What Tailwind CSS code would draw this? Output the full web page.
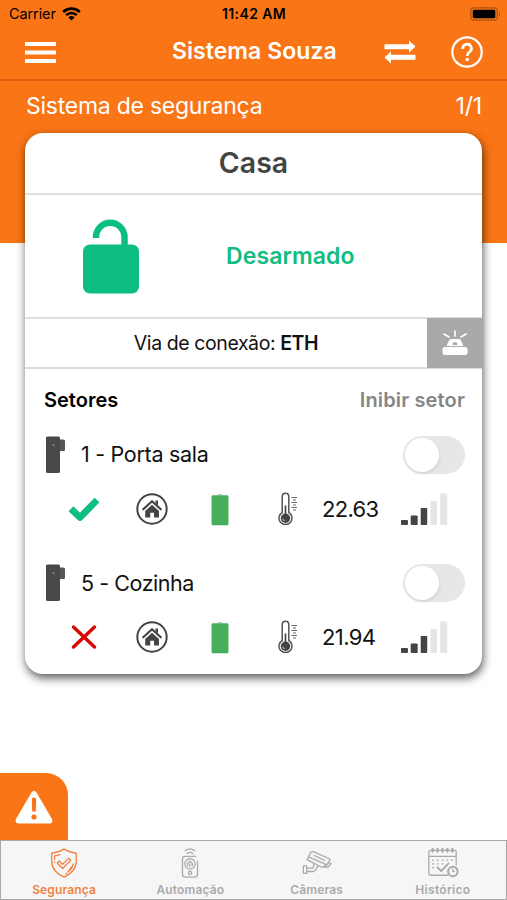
<!DOCTYPE html>
<html lang="pt-BR">
<head>
<meta charset="utf-8">
<meta name="viewport" content="width=device-width, initial-scale=1">
<title>Sistema Souza</title>
<script src="https://cdn.jsdelivr.net/npm/@tailwindcss/browser@4"></script>
</head>
<body class="bg-white">
<svg class="hidden">
  <defs>
    <symbol id="sensor" viewBox="0 0 20 38">
      <path d="M13 3.500H17.500Q19 3.500 19 5V13.500Q19 15 17.500 15H13Z" fill="#555"/>
      <rect x="0" y="0.500" width="14" height="36.500" rx="1.500" fill="#494949"/>
      <circle cx="7.500" cy="9" r="1" fill="#8a8a8a"/>
    </symbol>
    <symbol id="home" viewBox="0 0 32 32">
      <circle cx="16" cy="16" r="14.700" fill="none" stroke="#444" stroke-width="2"/>
      <path d="M7.200 16.300L16 8.200L24.800 16.300" fill="none" stroke="#444" stroke-width="2.200" stroke-linecap="round" stroke-linejoin="round"/>
      <path d="M19.500 7.500H22V12.500L19.500 10Z" fill="#444"/>
      <path d="M16 11.800L23 18V24.500H18V19.800H14.200V24.500H9.200V18Z" fill="#444"/>
    </symbol>
    <symbol id="battery" viewBox="0 0 18 33">
      <path d="M6.500 2Q6.500 1 7.500 1H10.500Q11.500 1 11.500 2Z" fill="#c3c9bd"/>
      <rect x="0.500" y="2.300" width="17" height="30" rx="1.500" fill="#45af59"/>
    </symbol>
    <symbol id="thermo" viewBox="0 0 20 34">
      <path d="M4.200 20.500V4.500A3.300 3.300 0 0 1 10.800 4.500V20.500A6.500 6.500 0 1 1 4.200 20.500Z" fill="#fff" stroke="#555" stroke-width="1.500"/>
      <circle cx="7.500" cy="26.200" r="4.700" fill="#444"/>
      <path d="M7.500 24V13.500" stroke="#444" stroke-width="1.600"/>
      <path d="M4.600 26.500A3 3 0 0 0 7 29" fill="none" stroke="#ccc" stroke-width="0.900"/>
      <path d="M13.500 5.500H19M15 8H18M13.500 10.500H19M15 13H18M13.500 15.500H19M15 18H18" stroke="#666" stroke-width="1.200"/>
    </symbol>
    <symbol id="signal" viewBox="0 0 48 33">
      <rect x="1" y="27" width="7" height="5" rx="1" fill="#444"/>
      <rect x="10.700" y="22.500" width="7" height="9.500" rx="1" fill="#444"/>
      <rect x="20.700" y="15" width="6.500" height="17" rx="1" fill="#444"/>
      <rect x="30.500" y="8" width="6.500" height="24" rx="1" fill="#e5e5e5"/>
      <rect x="40.200" y="0.500" width="7" height="31.500" rx="1" fill="#e5e5e5"/>
    </symbol>
  </defs>
</svg>
<div class="flex h-[900px] w-[507px] flex-col overflow-hidden bg-white font-['Inter','Liberation_Sans',sans-serif]">
  <header class="h-[243px] shrink-0 bg-[#f97516]">
    <div class="grid h-[26px] grid-cols-3 items-center pt-[1px] pr-[6px] pl-[9px] text-black">
      <div class="flex items-center gap-[6px]">
        <span class="text-[14.500px] tracking-[-0.100px]">Carrier</span>
        <svg class="h-[14px] w-[19px]" viewBox="0 0 19 14"><path d="M1.200 5A12 12 0 0 1 17.800 5" fill="none" stroke="#000" stroke-width="2.600"/><path d="M4.200 8.200A7.600 7.600 0 0 1 14.800 8.200" fill="none" stroke="#000" stroke-width="2.500"/><path d="M9.500 13.500L6.400 10.400A4.400 4.400 0 0 1 12.600 10.400Z"/></svg>
      </div>
      <span class="-ml-[2px] text-center text-[14px] font-semibold tracking-[0.400px] whitespace-nowrap">11:42 AM</span>
      <svg class="h-[14px] w-[31px] justify-self-end" viewBox="0 0 31 14"><rect x="0.800" y="0.800" width="26.500" height="12.400" rx="3.500" fill="none" stroke="#ab5312" stroke-width="1.300"/><rect x="2.800" y="2.700" width="22.500" height="8.600" rx="1.500"/><path d="M29 4.800Q30.700 7 29 9.200Z" fill="#8b430d"/></svg>
    </div>
    <div class="flex h-[55px] items-center border-b-2 border-[#df600f] pr-[24px] pl-[25px] pb-[1px]">
      <svg class="h-[21px] w-[31px]" viewBox="0 0 31 21" fill="#fff"><path d="M0 0H31V4H0ZM0 8.500H31V12.500H0ZM0 17H31V21H0Z"/></svg>
      <h1 class="ml-[116px] w-[165px] pb-[2px] text-[23px] font-semibold tracking-[0.050px] whitespace-nowrap text-white">Sistema Souza</h1>
      <svg class="ml-[47px] h-[24px] w-[32px]" viewBox="0 0 32 24" fill="#fff"><path d="M0.500 4.200H25V0.500L31.500 6.500L25 12.500V9.200H0.500ZM31.500 14.800H7V11.500L0.500 17.500L7 23.500V19.800H31.500Z"/></svg>
      <svg class="ml-auto h-[32px] w-[32px]" viewBox="0 0 32 32" fill="none" stroke="#fff"><circle cx="16" cy="16" r="14.700" stroke-width="2.200"/><path d="M11.800 13A4.300 4.300 0 1 1 18.500 16C17 17 16.200 17.700 16.200 20" stroke-width="2.700"/><circle cx="16.200" cy="23.500" r="1.800" fill="#fff" stroke="none"/></svg>
    </div>
    <div class="flex h-[50px] items-center justify-between pr-[25px] pl-[26px] text-[23px] text-white">
      <span class="tracking-[-0.250px]">Sistema de segurança</span><span class="tracking-[-0.200px]">1/1</span>
    </div>
  </header>

  <main class="relative z-10 mx-[25px] -mt-[110px] flex h-[541px] shrink-0 flex-col overflow-hidden rounded-[18px] bg-white shadow-[1px_4px_10px_rgba(0,0,0,0.650)]">
    <h2 class="flex h-[62px] items-center justify-center border-b-2 border-[#dedede] text-[28.500px] font-semibold text-[#444]">Casa</h2>
    <section class="flex h-[122px] items-center">
      <svg class="ml-[57px] h-[75px] w-[58px]" viewBox="0 0 58 75"><path d="M14 19V18A14.200 14.200 0 0 1 42.500 18V28" fill="none" stroke="#0cbf80" stroke-width="6.500"/><rect x="1" y="25.500" width="56" height="49" rx="7" fill="#0cbf80"/></svg>
      <strong class="ml-[86px] text-[23px] font-semibold tracking-[0.100px] text-[#13bc80]">Desarmado</strong>
    </section>
    <section class="flex h-[52px] border-y-2 border-[#dedede]">
      <p class="flex flex-1 items-center justify-center pt-[2px] text-[19.500px] text-[#111]"><span class="tracking-[-0.420px] whitespace-nowrap">Via de conexão: <b class="font-semibold">ETH</b></span></p>
      <div class="-my-[1px] flex w-[55px] items-center justify-center bg-[#a9a9a9]">
        <svg class="h-[26px] w-[26px]" viewBox="0 0 26 26"><path d="M13 1V6M2 4L7 7M24 4L19 7" stroke="#fff" stroke-width="1.700" stroke-linecap="round"/><path d="M4.500 16L7 10.500Q7.600 9 9 9H17Q18.400 9 19 10.500L21.500 16Z" fill="#fff"/><path d="M10.500 15V14.500A2.500 2.500 0 0 1 15.500 14.500V15Z" fill="#a9a9a9"/><rect x="0.500" y="17" width="25" height="8" rx="2.500" fill="#fff"/></svg>
      </div>
    </section>
    <section class="flex flex-col pr-[17px] pl-[19px]">
      <div class="flex h-[60px] items-center justify-between pt-[2px] text-[20px] font-semibold"><h3 class="text-black">Setores</h3><span class="tracking-[0.150px] text-[#868686]">Inibir setor</span></div>
      <div class="flex h-[128px] flex-col">
        <div class="flex h-[51px] items-center">
          <svg class="ml-[2px] h-[38px] w-[20px]"><use href="#sensor"/></svg>
          <span class="ml-[15px] text-[21.500px] tracking-[-0.300px] text-[#111]">1 - Porta sala</span>
          <span class="ml-auto flex h-[38px] w-[62px] items-center rounded-full bg-[#e7e7e9] p-[2px]"><i class="size-[34px] rounded-full bg-white shadow-[1px_2px_3px_rgba(0,0,0,0.080)]"></i></span>
        </div>
        <div class="flex h-[58px] items-center">
          <svg class="ml-[23px] h-[26px] w-[34px]" viewBox="0 0 34 26"><path d="M4 12.800L13 21.500L30 4" fill="none" stroke="#0cbf80" stroke-width="6.800" stroke-linejoin="round"/></svg>
          <svg class="ml-[35px] size-[32px]"><use href="#home"/></svg>
          <svg class="ml-[43px] h-[33px] w-[18px]"><use href="#battery"/></svg>
          <svg class="ml-[49px] h-[34px] w-[20px]"><use href="#thermo"/></svg>
          <span class="ml-[24px] w-[78px] text-[22px] tracking-[-0.700px] text-[#111]">22.63</span>
          <svg class="h-[33px] w-[48px]"><use href="#signal"/></svg>
        </div>
      </div>
      <div class="flex h-[110px] flex-col">
        <div class="flex h-[52px] items-center">
          <svg class="ml-[2px] h-[38px] w-[20px]"><use href="#sensor"/></svg>
          <span class="ml-[15px] text-[21.500px] tracking-[-0.450px] text-[#111]">5 - Cozinha</span>
          <span class="ml-auto flex h-[38px] w-[62px] items-center rounded-full bg-[#e7e7e9] p-[2px]"><i class="size-[34px] rounded-full bg-white shadow-[1px_2px_3px_rgba(0,0,0,0.080)]"></i></span>
        </div>
        <div class="flex h-[56px] items-center">
          <svg class="ml-[23px] h-[26px] w-[34px]" viewBox="0 0 34 26"><path d="M6.500 3L27.500 23M27.500 3L6.500 23" fill="none" stroke="#d60808" stroke-width="3.500" stroke-linecap="round"/></svg>
          <svg class="ml-[35px] size-[32px]"><use href="#home"/></svg>
          <svg class="ml-[43px] h-[33px] w-[18px]"><use href="#battery"/></svg>
          <svg class="ml-[49px] h-[34px] w-[20px]"><use href="#thermo"/></svg>
          <span class="ml-[24px] w-[78px] text-[22px] tracking-[-0.600px] text-[#111]">21.94</span>
          <svg class="h-[33px] w-[48px]"><use href="#signal"/></svg>
        </div>
      </div>
    </section>
  </main>

  <div class="mt-auto flex h-[67px] w-[68px] items-center justify-center rounded-tr-[22px] bg-[#f97516]">
    <svg class="h-[34px] w-[38px]" viewBox="0 0 38 34"><path d="M16.500 2.500Q19 -1 21.500 2.500L37 29Q38.500 33 35 33.500H3Q-0.500 33 1 29Z" fill="#fff"/><path d="M16.800 9Q16.800 7.500 19 7.500Q21.200 7.500 21.200 9L20.800 21.500H17.200Z" fill="#f97516"/><circle cx="19" cy="27" r="2.600" fill="#f97516"/></svg>
  </div>
  <nav class="flex h-[60px] shrink-0 border border-[#a9a9a9] bg-[#f6f6f6] text-[12px] font-semibold text-[#aaa]">
    <a class="flex flex-1 flex-col items-center pt-[6px] text-[#ef8242]">
      <svg class="h-[34px] w-[32px]" viewBox="0 0 32 34" fill="none" stroke="currentColor" stroke-width="1.400" stroke-linejoin="round" stroke-linecap="round"><path d="M16 2C12 5 7 6 3 6.500V16C3 23 9 29 16 32C23 29 29 23 29 16V6.500C25 6 20 5 16 2Z"/><path d="M6 13V9.500Q9 9 11.500 8M6 16.500V16M26 18Q25 22 22 25M19 28L18 28.800M20 26.600L24 21" /><path d="M8.800 17L11 14.800L14.500 18.500L21 11.800L23.200 14L14.500 22.800Z"/></svg>
      <span class="mt-[2px] tracking-[0.150px]">Segurança</span>
    </a>
    <a class="flex flex-1 flex-col items-center pt-[6px]">
      <svg class="h-[34px] w-[32px]" viewBox="0 0 32 34" fill="none" stroke="currentColor" stroke-width="1.400" stroke-linecap="round"><path d="M11 4Q16 0 21 4M13 7Q16 4.500 19 7"/><path d="M22 10H11Q8 10 8 13V29Q8 32 11 32H21Q24 32 24 29V15"/><circle cx="16" cy="18" r="5.500"/><path d="M13.500 20V17.500L16 15L18.500 17.500V20M16 18V21"/><circle cx="16" cy="27.500" r="1.700"/></svg>
      <span class="mt-[2px] tracking-[0.150px]">Automação</span>
    </a>
    <a class="flex flex-1 flex-col items-center pt-[6px]">
      <svg class="h-[34px] w-[34px]" viewBox="0 0 34 34" fill="none" stroke="currentColor" stroke-width="1.400" stroke-linejoin="round" stroke-linecap="round"><path d="M10 6Q12 4 14.500 5.500L31 13L27.500 19L8 10.500Z"/><path d="M8 10.500L6.500 13.500L22 21.500L27.500 19M29 16.500L32 17.500L28.500 21.500L23.500 21"/><path d="M14 18L12.500 22.500H6V26H13.500Q15 26 16 23.500L18 20M6 20H2.500V28H6Z"/><path d="M14 9L25 14.300"/></svg>
      <span class="mt-[2px] tracking-[0.150px]">Câmeras</span>
    </a>
    <a class="flex flex-1 flex-col items-center pt-[6px]">
      <svg class="h-[34px] w-[34px]" viewBox="0 0 34 34" fill="none" stroke="currentColor" stroke-width="1.400" stroke-linejoin="round" stroke-linecap="round"><path d="M22 30H4Q2 30 2 28V5Q2 3.500 4 3.500H29Q31 3.500 31 5V19M2 10H31"/><path d="M6 2V5M11.200 2V5M16.500 2V5M21.700 2V5M27 2V5" stroke-width="2.400"/><path d="M6 14H7M11 14H12M16 14H17M21 14H22M26 14H27M6 18H7M11 18H12M16 18H17M6 22H7"/><path d="M11 21.500L15 25.500L23 17.500" stroke-width="1.900"/><circle cx="27.500" cy="26" r="5" stroke-width="2.200"/><path d="M27.500 23.500V26H29"/></svg>
      <span class="mt-[2px] tracking-[0.300px]">Histórico</span>
    </a>
  </nav>
</div>
</body>
</html>
